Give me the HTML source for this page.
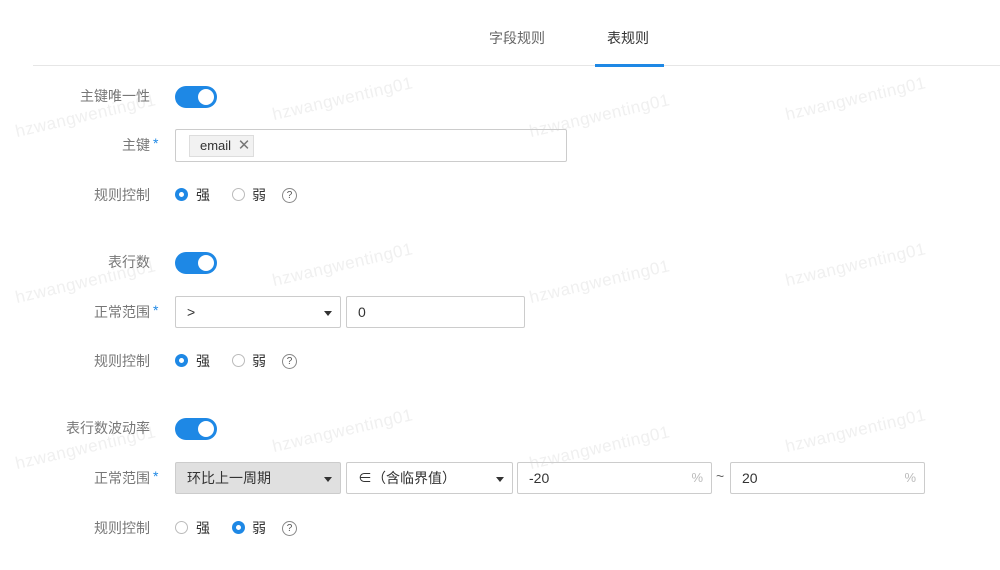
<!DOCTYPE html>
<html><head><meta charset="utf-8"><style>
body{margin:0;width:1000px;height:570px;background:#fff;position:relative;overflow:hidden;font-family:"Liberation Sans","Noto Sans CJK SC",sans-serif;font-size:14px;color:#333}
.a{position:absolute}
.lbl{position:absolute;right:850px;color:#777;font-size:14px;line-height:20px;white-space:nowrap}
.star{color:#1e88e5;margin-left:3px;position:absolute;left:100%;top:-2px}
.tog{position:absolute;left:175px;width:42px;height:22px;border-radius:11px;background:#1e88e5}
.tog:after{content:"";position:absolute;right:3px;top:3px;width:16px;height:16px;border-radius:50%;background:#fff}
.box{position:absolute;height:32px;border:1px solid #ccc;border-radius:2px;box-sizing:border-box;line-height:30px;padding-left:11px;font-size:14px;color:#333}
.caret{position:absolute;right:8px;top:14px;border-left:4px solid transparent;border-right:4px solid transparent;border-top:5px solid #333}
.pct{position:absolute;right:8px;top:0;color:#bbb;font-size:13px}
.r{position:absolute;width:13px;height:13px;border:1px solid #bbb;border-radius:50%;box-sizing:border-box}
.r.on{border:4px solid #1e88e5}
.q{position:absolute;width:15px;height:15px;border:1px solid #888;border-radius:50%;box-sizing:border-box;font-size:10px;line-height:13px;text-align:center;color:#555}
.wm{position:absolute;color:#f0f0f0;font-size:17px;transform:rotate(-13deg);transform-origin:left bottom;white-space:nowrap;letter-spacing:0.5px}
</style></head><body>
<div class="a" style="left:33px;top:65px;width:967px;height:1px;background:#e6e6e6"></div>
<div class="a" style="left:489px;top:28px;color:#666;font-size:14px">字段规则</div>
<div class="a" style="left:607px;top:28px;color:#333;font-size:14px">表规则</div>
<div class="a" style="left:595px;top:64px;width:69px;height:3px;background:#1e88e5"></div>

<div class="wm" style="left:18px;top:122px">hzwangwenting01</div>
<div class="wm" style="left:275px;top:105px">hzwangwenting01</div>
<div class="wm" style="left:532px;top:122px">hzwangwenting01</div>
<div class="wm" style="left:788px;top:105px">hzwangwenting01</div>
<div class="wm" style="left:18px;top:288px">hzwangwenting01</div>
<div class="wm" style="left:275px;top:271px">hzwangwenting01</div>
<div class="wm" style="left:532px;top:288px">hzwangwenting01</div>
<div class="wm" style="left:788px;top:271px">hzwangwenting01</div>
<div class="wm" style="left:18px;top:454px">hzwangwenting01</div>
<div class="wm" style="left:275px;top:437px">hzwangwenting01</div>
<div class="wm" style="left:532px;top:454px">hzwangwenting01</div>
<div class="wm" style="left:788px;top:437px">hzwangwenting01</div>

<!-- section 1 -->
<div class="lbl" style="top:86px">主键唯一性</div>
<div class="tog" style="top:86px"></div>
<div class="lbl" style="top:135px">主键<span class="star">*</span></div>
<div class="box" style="left:175px;top:129px;width:392px;height:33px"></div>
<div class="a" style="left:189px;top:135px;width:65px;height:22px;background:#f2f2f2;border:1px solid #ddd;box-sizing:border-box;line-height:20px;padding-left:10px;font-size:13px">email <span style="color:#777;font-size:15px;margin-left:3px">✕</span></div>
<div class="lbl" style="top:185px">规则控制</div>
<div class="r on" style="left:175px;top:188px"></div><div class="a" style="left:196px;top:185px">强</div>
<div class="r" style="left:232px;top:188px"></div><div class="a" style="left:252px;top:185px">弱</div>
<div class="q" style="left:282px;top:188px">?</div>

<!-- section 2 -->
<div class="lbl" style="top:252px">表行数</div>
<div class="tog" style="top:252px"></div>
<div class="lbl" style="top:302px">正常范围<span class="star">*</span></div>
<div class="box" style="left:175px;top:296px;width:166px">&gt;<div class="caret"></div></div>
<div class="box" style="left:346px;top:296px;width:179px">0</div>
<div class="lbl" style="top:351px">规则控制</div>
<div class="r on" style="left:175px;top:354px"></div><div class="a" style="left:196px;top:351px">强</div>
<div class="r" style="left:232px;top:354px"></div><div class="a" style="left:252px;top:351px">弱</div>
<div class="q" style="left:282px;top:354px">?</div>

<!-- section 3 -->
<div class="lbl" style="top:418px">表行数波动率</div>
<div class="tog" style="top:418px"></div>
<div class="lbl" style="top:468px">正常范围<span class="star">*</span></div>
<div class="box" style="left:175px;top:462px;width:166px;background:#e0e0e0">环比上一周期<div class="caret"></div></div>
<div class="box" style="left:346px;top:462px;width:167px">∈（含临界值）<div class="caret"></div></div>
<div class="box" style="left:517px;top:462px;width:195px">-20<span class="pct">%</span></div>
<div class="a" style="left:716px;top:468px;color:#666">~</div>
<div class="box" style="left:730px;top:462px;width:195px">20<span class="pct">%</span></div>
<div class="lbl" style="top:518px">规则控制</div>
<div class="r" style="left:175px;top:521px"></div><div class="a" style="left:196px;top:518px">强</div>
<div class="r on" style="left:232px;top:521px"></div><div class="a" style="left:252px;top:518px">弱</div>
<div class="q" style="left:282px;top:521px">?</div>
</body></html>
